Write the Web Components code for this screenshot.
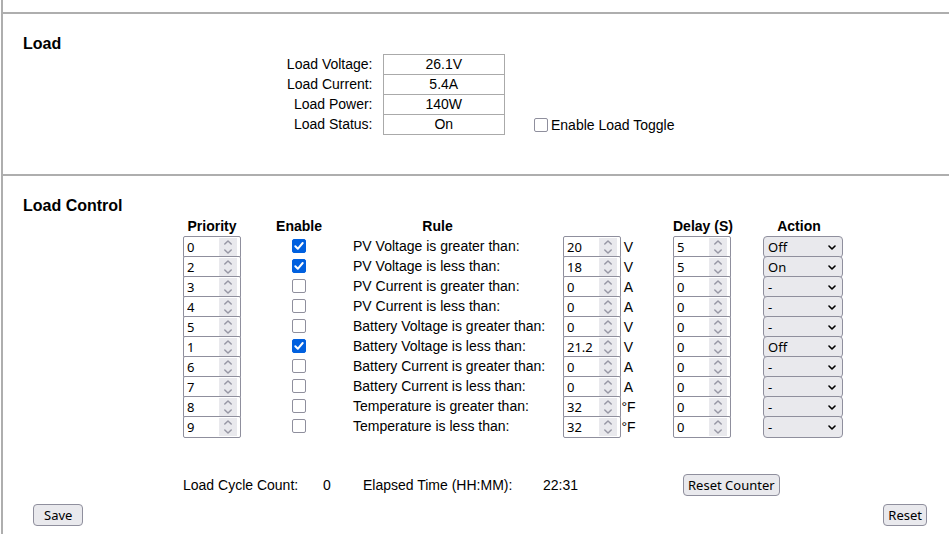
<!DOCTYPE html>
<html lang="en">
<head>
<meta charset="utf-8">
<title>Load Control</title>
<style>
body { margin: 0; background: #fff; color: #000; font: 14px/20px "Liberation Sans", Arial, sans-serif; --line: #aeaeae; --edge: #8f8f9d; --face: #e9e9ed; --ui: 13px/20px "Noto Sans", sans-serif; }
</style>
</head>
<body>
<controller-page>
  <page-section heading="Load"><load-status></load-status></page-section>
  <page-section heading="Load Control">
    <rule-table></rule-table>
    <cycle-summary></cycle-summary>
    <form-actions></form-actions>
  </page-section>
</controller-page>
<script>
const define = (name, css, render) => customElements.define(name, class extends HTMLElement {
  connectedCallback() {
    if (this.shadowRoot) return;
    this.attachShadow({ mode: 'open' }).innerHTML =
      `<style>*{box-sizing:border-box}:host{display:block}${css}</style>${render(this)}`;
    if (this.wire) this.wire();
  }
});

define('controller-page', `
  main { margin-left: 1px; border-left: 2px solid var(--line); padding-top: 12px; min-height: 100vh; }
`, () => '<main><slot></slot></main>');

define('page-section', `
  section { border-top: 2px solid var(--line); padding-top: 20px; }
  h2 { margin: 0 0 0 20px; font-size: 16px; line-height: 20px; font-weight: bold; }
`, el => `<section><h2>${el.getAttribute('heading')}</h2><slot></slot></section>`);

define('check-field', `
  label { display: inline-flex; align-items: center; gap: 3px; height: 20px; vertical-align: top; }
  .mark { display: grid; }
  .mark > * { grid-area: 1 / 1; }
  input { appearance: none; margin: 0; width: 14px; height: 14px; border: 1px solid var(--edge); border-radius: 2px; background: #fff; }
  input:checked { background: #0060df; border-color: #0060df; }
  svg { width: 14px; height: 14px; pointer-events: none; visibility: hidden; }
  input:checked + svg { visibility: visible; }
`, el => `<label><span class="mark">
    <input type="checkbox" ${el.hasAttribute('checked') ? 'checked' : ''} ${el.hasAttribute('name') ? `aria-label="${el.getAttribute('name')}"` : ''}>
    <svg viewBox="0 0 14 14" fill="none" stroke="#fff" stroke-width="2" stroke-linecap="round" stroke-linejoin="round"><path d="M3.3 7.3 5.8 9.8 10.7 4"/></svg>
  </span><slot></slot></label>`);

define('number-field', `
  :host { display: flex; height: 22px; margin-bottom: -2px; line-height: 22px; }
  .box { display: flex; width: 58px; border: 1px solid var(--edge); border-radius: 2px; background: #fff; padding: 1px 3px 1px 0; }
  input { appearance: textfield; flex: 1; min-width: 0; border: 0; margin: 0; padding: 0 0 0 3px; background: none; color: #000; font: var(--ui); line-height: 18px; height: 18px; }
  input::-webkit-inner-spin-button, input::-webkit-outer-spin-button { appearance: none; margin: 0; }
  .spin { display: flex; flex-direction: column; width: 18px; background: var(--face); }
  button { flex: 1; display: flex; justify-content: center; align-items: center; border: 0; padding: 0; background: none; }
  svg { display: block; width: 8px; height: 5px; fill: none; stroke: #9898a5; stroke-width: 1.5; stroke-linecap: round; stroke-linejoin: round; }
  .unit { width: 15px; text-align: center; white-space: nowrap; }
`, el => `<div class="box">
    <input type="number" step="any" value="${el.getAttribute('value')}" aria-label="${el.getAttribute('name')}">
    <div class="spin">
      <button type="button" tabindex="-1" aria-label="Increase"><svg viewBox="0 0 8 5"><path d="M.8 4 4 1 7.2 4"/></svg></button>
      <button type="button" tabindex="-1" aria-label="Decrease"><svg viewBox="0 0 8 5"><path d="M.8 1 4 4 7.2 1"/></svg></button>
    </div>
  </div>${el.hasAttribute('unit') ? `<span class="unit">${el.getAttribute('unit')}</span>` : ''}`);

customElements.get('number-field').prototype.wire = function () {
  const input = this.shadowRoot.querySelector('input');
  this.shadowRoot.querySelectorAll('button').forEach((b, i) =>
    b.addEventListener('click', () => { input.value = Number(input.value) + (i ? -1 : 1); }));
};

define('action-select', `
  :host { display: grid; height: 22px; margin-bottom: -2px; }
  select, svg { grid-area: 1 / 1; }
  select { appearance: none; width: 100%; height: 22px; margin: 0; padding: 0 20px 0 4px; border: 1px solid var(--edge); border-radius: 4px; background: var(--face); color: #000; font: var(--ui); }
  svg { justify-self: end; align-self: center; margin-right: 7px; width: 8px; height: 6px; fill: none; stroke: #000; stroke-width: 1.6; stroke-linecap: round; stroke-linejoin: round; pointer-events: none; }
`, el => `<select aria-label="${el.getAttribute('name')}">${['-', 'Off', 'On'].map(o =>
    `<option${o === el.getAttribute('value') ? ' selected' : ''}>${o}</option>`).join('')}</select>
  <svg viewBox="0 0 8 6"><path d="M1 2 4 5 7 2"/></svg>`);

define('push-button', `
  :host { display: inline-block; }
  button { display: block; height: 22px; margin: 0; padding: 0 var(--pad, 4px); border: 1px solid var(--edge); border-radius: 4px; background: var(--face); color: #000; font: var(--ui); white-space: nowrap; }
`, () => '<button type="button"><slot></slot></button>');

define('load-status', `
  :host { display: flex; align-items: flex-end; padding: 0 20px 39px 180px; }
  table { border-collapse: collapse; table-layout: fixed; width: 322px; }
  th, td { height: 20px; padding: 0; line-height: 19px; font-weight: normal; }
  th { width: 200px; padding-right: 10px; text-align: right; }
  td { border: 1px solid #aaa; text-align: center; }
  check-field { margin-left: 29px; }
`, () => `<table>${[['Voltage', '26.1V'], ['Current', '5.4A'], ['Power', '140W'], ['Status', 'On']].map(([k, v]) =>
    `<tr><th scope="row">Load ${k}:</th><td>${v}</td></tr>`).join('')}</table>
  <check-field>Enable Load Toggle</check-field>`);

const rules = [
  [0, 1, 'PV Voltage is greater than:', 20, 'V', 5, 'Off'],
  [2, 1, 'PV Voltage is less than:', 18, 'V', 5, 'On'],
  [3, 0, 'PV Current is greater than:', 0, 'A', 0, '-'],
  [4, 0, 'PV Current is less than:', 0, 'A', 0, '-'],
  [5, 0, 'Battery Voltage is greater than:', 0, 'V', 0, '-'],
  [1, 1, 'Battery Voltage is less than:', 21.2, 'V', 0, 'Off'],
  [6, 0, 'Battery Current is greater than:', 0, 'A', 0, '-'],
  [7, 0, 'Battery Current is less than:', 0, 'A', 0, '-'],
  [8, 0, 'Temperature is greater than:', 32, '°F', 0, '-'],
  [9, 0, 'Temperature is less than:', 32, '°F', 0, '-']
];

define('rule-table', `
  :host { padding-left: 180px; }
  table { border-collapse: collapse; table-layout: fixed; width: 660px; }
  th, td { height: 20px; padding: 0; vertical-align: top; white-space: nowrap; }
  .p { width: 58px; } .e { width: 112px; padding-left: 4px; text-align: center; }
  .r { width: 210px; } .v { width: 110px; } .d { width: 90px; } .a { width: 80px; }
  th.r { padding-right: 41px; } th.d { text-align: left; } th.a { padding-right: 8px; }
`, () => `<table><thead><tr><th class="p">Priority</th><th class="e">Enable</th><th class="r">Rule</th><td class="v"></td><th class="d">Delay (S)</th><th class="a">Action</th></tr></thead><tbody>${rules.map(([p, e, r, v, u, d, a]) =>
  `<tr><td><number-field name="Priority, ${r}" value="${p}"></number-field></td>
   <td class="e"><check-field name="Enable, ${r}" ${e ? 'checked' : ''}></check-field></td>
   <td>${r}</td>
   <td><number-field name="${r}" value="${v}" unit="${u}"></number-field></td>
   <td><number-field name="Delay, ${r}" value="${d}"></number-field></td>
   <td><action-select name="Action, ${r}" value="${a}"></action-select></td></tr>`).join('')}</tbody></table>`);

define('cycle-summary', `
  :host { display: grid; grid-template-columns: 140px 40px 180px 140px auto; justify-content: start; align-items: center; margin-top: 38px; padding-left: 180px; }
`, () => `<span>Load Cycle Count:</span><span>0</span><span>Elapsed Time (HH:MM):</span><span>22:31</span><push-button>Reset Counter</push-button>`);

define('form-actions', `
  :host { display: flex; justify-content: space-between; padding: 8px 22px 8px 30px; }
  .save { --pad: 10px; }
`, () => `<push-button class="save">Save</push-button><push-button>Reset</push-button>`);
</script>
</body>
</html>
